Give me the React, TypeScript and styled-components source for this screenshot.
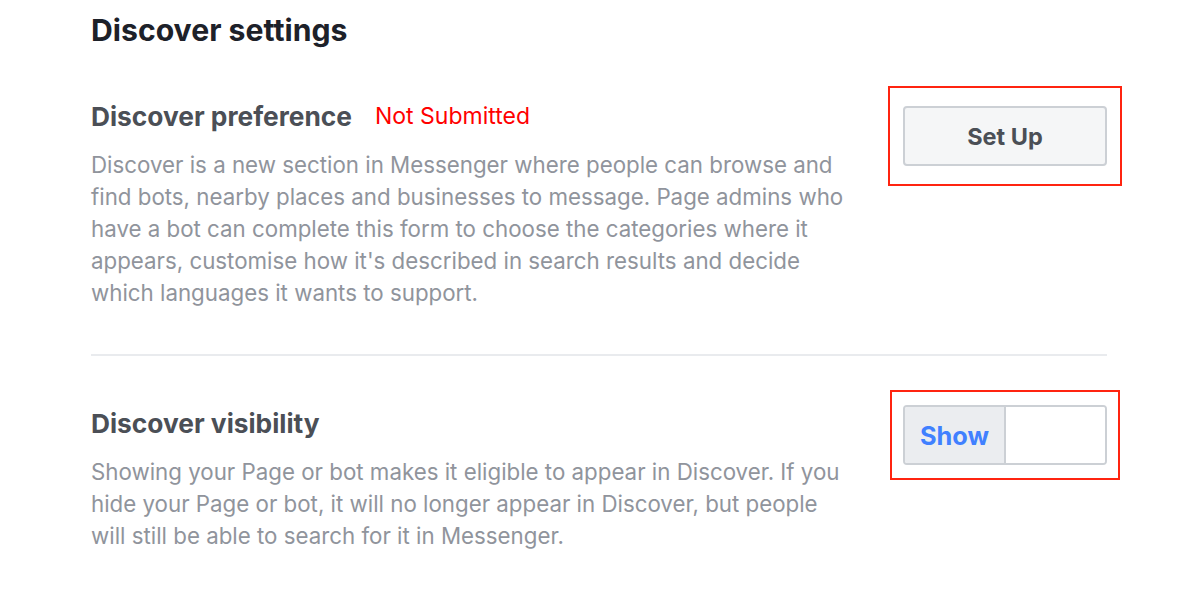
import React from 'react';
import styled, { createGlobalStyle } from 'styled-components';

const GlobalStyle = createGlobalStyle`
  html, body {
    margin: 0;
    padding: 0;
    background: #fff;
  }
  body {
    font-family: Inter, "Liberation Sans", Arial, sans-serif;
    -webkit-font-smoothing: antialiased;
  }
`;

const App: React.FC = () => {
  return (
    <>
      <GlobalStyle />
      <Page>
        <PageTitle>Discover settings</PageTitle>

        <Section>
          <TextColumn $offset={15}>
            <HeadingRow>
              <SectionTitle>Discover preference</SectionTitle>
              <Status>Not Submitted</Status>
            </HeadingRow>
            <Description>
              Discover is a new section in Messenger where people can browse and
              <br />
              find bots, nearby places and businesses to message. Page admins who
              <br />
              have a bot can complete this form to choose the categories where it
              <br />
              appears, customise how it's described in search results and decide
              <br />
              which languages it wants to support.
            </Description>
          </TextColumn>
          <Highlight $height={100} $width={234} $right={0}>
            <SetUpButton>Set Up</SetUpButton>
          </Highlight>
        </Section>

        <Divider />

        <Section>
          <TextColumn $offset={18}>
            <HeadingRow>
              <SectionTitle>Discover visibility</SectionTitle>
            </HeadingRow>
            <Description>
              Showing your Page or bot makes it eligible to appear in Discover. If you
              <br />
              hide your Page or bot, it will no longer appear in Discover, but people
              <br />
              will still be able to search for it in Messenger.
            </Description>
          </TextColumn>
          <Highlight $height={90} $width={230} $right={2}>
            <Toggle>
              <ToggleOption $active>Show</ToggleOption>
              <ToggleOption />
            </Toggle>
          </Highlight>
        </Section>
      </Page>
    </>
  );
};

const Page = styled.div`
  width: 1200px;
  height: 590px;
  box-sizing: border-box;
  padding: 12px 78px 0 91px;
  overflow: hidden;
`;

const PageTitle = styled.h1`
  margin: 0 0 38px;
  font-size: 30.2px;
  line-height: 36px;
  font-weight: 700;
  color: #1d2129;
`;

const Section = styled.div`
  display: flex;
  justify-content: space-between;
  align-items: flex-start;
`;

const TextColumn = styled.div<{ $offset: number }>`
  padding-top: ${(p) => p.$offset}px;
`;

const HeadingRow = styled.div`
  display: flex;
  align-items: baseline;
  gap: 23px;
`;

const SectionTitle = styled.h2`
  margin: 0;
  font-size: 26.3px;
  line-height: 32px;
  font-weight: 700;
  color: #4b4f56;
  white-space: nowrap;
`;

const Status = styled.span`
  position: relative;
  top: -2px;
  font-size: 23px;
  color: #ff0000;
`;

const Description = styled.p`
  margin: 16px 0 0;
  font-size: 22.3px;
  line-height: 32px;
  color: #90949c;
  white-space: nowrap;
`;

const Highlight = styled.div<{ $height: number; $width: number; $right: number }>`
  flex: none;
  width: ${(p) => p.$width}px;
  height: ${(p) => p.$height}px;
  margin-right: ${(p) => p.$right}px;
  box-sizing: border-box;
  border: 2px solid #ff2410;
  display: flex;
  align-items: center;
  justify-content: center;
`;

const SetUpButton = styled.button`
  width: 204px;
  height: 60px;
  box-sizing: border-box;
  border: 2px solid #ccd0d5;
  border-radius: 4px;
  background: #f5f6f7;
  color: #4b4f56;
  font-family: inherit;
  font-size: 23.5px;
  font-weight: 700;
  cursor: pointer;
`;

const Toggle = styled.div`
  width: 204px;
  height: 60px;
  box-sizing: border-box;
  border: 2px solid #ccd0d5;
  border-radius: 4px;
  display: flex;
  overflow: hidden;
`;

const ToggleOption = styled.div<{ $active?: boolean }>`
  flex: 1;
  display: flex;
  align-items: center;
  justify-content: center;
  font-size: 25.3px;
  font-weight: 700;
  color: #4080ff;
  background: ${(p) => (p.$active ? '#ebedf0' : '#fff')};
  border-right: ${(p) => (p.$active ? '2px solid #ccd0d5' : 'none')};
`;

const Divider = styled.hr`
  margin: 45px 15px 34px 0;
  border: none;
  height: 2px;
  background: #e9ebee;
`;

export default App;
